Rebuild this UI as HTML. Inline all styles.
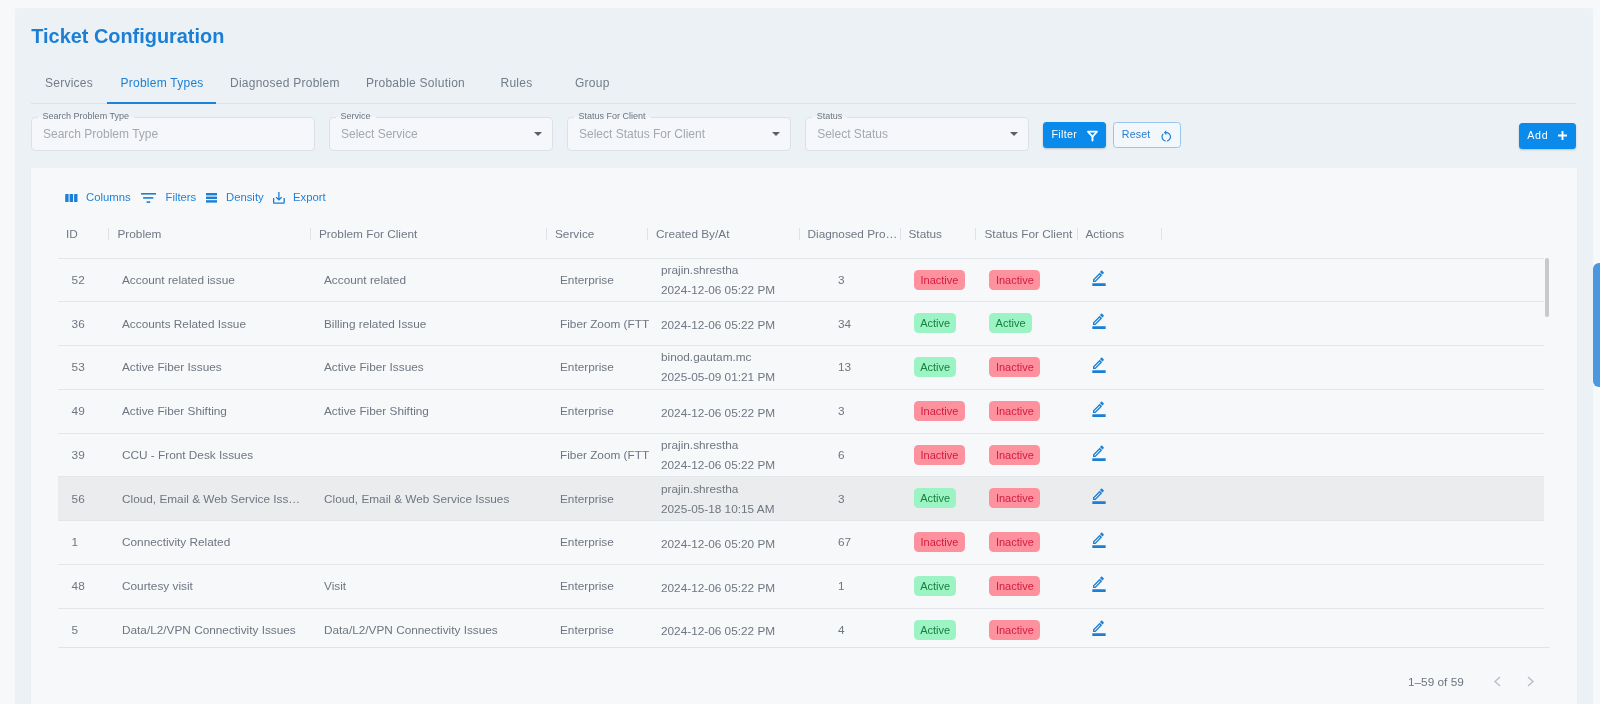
<!DOCTYPE html>
<html><head><meta charset="utf-8">
<style>
*{box-sizing:border-box;margin:0;padding:0}
html,body{width:1600px;height:704px;overflow:hidden;background:#f6f8f9;font-family:"Liberation Sans",sans-serif}
.abs{position:absolute;white-space:nowrap}
#panel{position:absolute;left:15px;top:8.5px;width:1577.6px;height:720px;background:#ebf1f5;border-radius:3px;box-shadow:0 -0.5px 1.5px rgba(0,0,0,0.04)}
#title{left:31.3px;top:24.3px;font-size:19.9px;font-weight:700;color:#1a7fd5;line-height:24px}
.tab{top:76px;font-size:12px;line-height:14px;color:#737d89;letter-spacing:0.25px}
.tab.on{color:#1a7fd5}
#tabline{left:31px;top:103px;width:1545px;height:1px;background:#dde2e8}
#ind{left:107px;top:102px;width:109px;height:2px;background:#1e82dc}
.fld{position:absolute;top:117px;height:34px;border:1px solid #dce1e6;border-radius:4px;background:#f5f7fa}
.lbl{position:absolute;top:-8.5px;left:5.6px;padding:0 5px;font-size:9px;line-height:12px;color:#6b7480;background:linear-gradient(#ebf1f5 0,#ebf1f5 7px,#f5f7fa 7px)}
.ph{position:absolute;left:11px;top:9.4px;font-size:12px;line-height:14px;color:#a3a9b0;white-space:nowrap}
.arr{position:absolute;top:13.9px;width:0;height:0;border-left:4px solid transparent;border-right:4px solid transparent;border-top:4.5px solid #5a5f66}
.btn{position:absolute;border-radius:3.5px;font-size:10.7px;line-height:14px}
.bt{letter-spacing:0.35px}
#card{position:absolute;left:31.3px;top:167.6px;width:1545.7px;height:560px;background:#f6f8fa;box-shadow:0 -0.5px 1.5px rgba(0,0,0,0.04)}
.tb{top:190.3px;font-size:11.3px;line-height:14px;color:#1e82dc}
.hd{top:227px;font-size:11.8px;line-height:14px;color:#707884}
.sep{position:absolute;top:228px;width:1px;height:12px;background:#dfe3e8}
.row{position:absolute;left:58px;width:1486px;height:43.75px;border-bottom:1px solid #e3e6ea}
.c{position:absolute;font-size:11.8px;line-height:14px;color:#6e7682;white-space:nowrap}
.chip{position:absolute;height:20px;border-radius:4.5px;font-size:11px;line-height:20px;text-align:center}
.in{background:#fd919e;color:#d31c3d}
.ac{background:#9cf4c4;color:#18803f}
</style></head>
<body>
<div id="root" style="position:absolute;left:0;top:0;width:1600px;height:704px;will-change:transform">
<div id="panel"></div>
<div id="title" class="abs">Ticket Configuration</div>
<div class="abs tab" style="left:45px">Services</div>
<div class="abs tab on" style="left:120.5px">Problem Types</div>
<div class="abs tab" style="left:230px">Diagnosed Problem</div>
<div class="abs tab" style="left:366px">Probable Solution</div>
<div class="abs tab" style="left:500.5px">Rules</div>
<div class="abs tab" style="left:575px">Group</div>
<div id="tabline" class="abs"></div>
<div id="ind" class="abs"></div>

<div class="fld" style="left:31px;width:283.5px"><span class="lbl">Search Problem Type</span><span class="ph">Search Problem Type</span></div>
<div class="fld" style="left:329px;width:223.8px"><span class="lbl">Service</span><span class="ph">Select Service</span><span class="arr" style="left:203.5px"></span></div>
<div class="fld" style="left:567px;width:224px"><span class="lbl">Status For Client</span><span class="ph">Select Status For Client</span><span class="arr" style="left:203.5px"></span></div>
<div class="fld" style="left:805.2px;width:224.3px"><span class="lbl">Status</span><span class="ph">Select Status</span><span class="arr" style="left:203.5px"></span></div>

<div class="btn" style="left:1043.4px;top:122px;width:62.6px;height:26px;background:#0a8beb;color:#fff;box-shadow:0 1px 2px rgba(0,0,0,.2)"><span class="abs bt" style="left:8px;top:4.8px">Filter</span>
<svg class="abs" style="left:42.6px;top:7.9px" width="12" height="12" viewBox="0 0 12 12"><path d="M1.9 1.6H11.1L6.5 6.6Z" fill="none" stroke="#fff" stroke-width="1.6" stroke-linejoin="round"/><path d="M6.5 6.3V10.6" stroke="#fff" stroke-width="1.9" stroke-linecap="round"/></svg></div>
<div class="btn" style="left:1113.2px;top:122px;width:67.5px;height:25.8px;border:1px solid #9ac5ea;background:#f2f7fc;color:#2283d6"><span class="abs bt" style="left:7.6px;top:3.6px;letter-spacing:0.15px;color:#2a7ccc">Reset</span>
<svg class="abs" style="left:44.5px;top:5.7px" width="14.5" height="14.5" viewBox="0 0 24 24"><path fill="#2283d6" d="M12 5V2L8 6l4 4V7c3.31 0 6 2.69 6 6 0 2.97-2.17 5.43-5 5.91v2.02c3.950-.49 7-3.85 7-7.93 0-4.42-3.58-8-8-8zm-6 8c0-1.65.67-3.15 1.76-4.24L6.34 7.34C4.9 8.79 4 10.79 4 13c0 4.08 3.05 7.44 7 7.93v-2.02c-2.83-.48-5-2.94-5-5.91z"/></svg></div>
<div class="btn" style="left:1519.3px;top:123.2px;width:56.6px;height:25.9px;background:#0a8beb;color:#fff;box-shadow:0 1px 2px rgba(0,0,0,.2)"><span class="abs bt" style="left:8px;top:5px;letter-spacing:0.65px">Add</span>
<svg class="abs" style="left:38.4px;top:7.9px" width="9" height="9" viewBox="0 0 9 9"><path d="M4.5 0V9M0 4.5H9" stroke="#fff" stroke-width="1.9"/></svg></div>

<div id="card"></div>
<svg class="abs" style="left:65px;top:193.8px" width="13" height="8.2" viewBox="0 0 13 8.2"><rect x="0.2" y="0" width="3.4" height="8.1" rx="0.5" fill="#1a7fd5"/><rect x="4.6" y="0" width="3.5" height="8.1" rx="0.5" fill="#1a7fd5"/><rect x="9.1" y="0" width="3.4" height="8.1" rx="0.5" fill="#1a7fd5"/></svg>
<svg class="abs" style="left:140.8px;top:193px" width="15" height="10" viewBox="0 0 15 10"><rect x="0" y="0" width="15" height="1.6" fill="#1a7fd5"/><rect x="2.1" y="4.1" width="10.2" height="1.6" fill="#1a7fd5"/><rect x="5.6" y="8.3" width="3.6" height="1.6" fill="#1a7fd5"/></svg>
<svg class="abs" style="left:205.6px;top:193.2px" width="11.3" height="9.6" viewBox="0 0 11.3 9.6"><rect x="0" y="0" width="11.3" height="2.4" fill="#1a7fd5"/><rect x="0" y="3.6" width="11.3" height="2.4" fill="#1a7fd5"/><rect x="0" y="7.2" width="11.3" height="2.4" fill="#1a7fd5"/></svg>
<svg class="abs" style="left:271.1px;top:190px" width="15.8" height="15.8" viewBox="0 0 24 24"><path fill="#1a7fd5" d="M19 12v7H5v-7H3v7c0 1.1.9 2 2 2h14c1.1 0 2-.9 2-2v-7h-2zm-6 .67l2.59-2.58L17 11.5l-5 5-5-5 1.41-1.41L11 12.67V3h2z"/></svg>
<div class="abs tb" style="left:86px">Columns</div>
<div class="abs tb" style="left:165.5px">Filters</div>
<div class="abs tb" style="left:226px">Density</div>
<div class="abs tb" style="left:293px">Export</div>

<div class="abs hd" style="left:66px">ID</div>
<div class="abs hd" style="left:117.5px">Problem</div>
<div class="abs hd" style="left:319px">Problem For Client</div>
<div class="abs hd" style="left:555px">Service</div>
<div class="abs hd" style="left:656px">Created By/At</div>
<div class="abs hd" style="left:807.5px">Diagnosed Pro…</div>
<div class="abs hd" style="left:908.5px">Status</div>
<div class="abs hd" style="left:984.5px">Status For Client</div>
<div class="abs hd" style="left:1085.5px">Actions</div>
<div class="sep" style="left:108px"></div>
<div class="sep" style="left:310px"></div>
<div class="sep" style="left:546px"></div>
<div class="sep" style="left:647px"></div>
<div class="sep" style="left:799px"></div>
<div class="sep" style="left:900px"></div>
<div class="sep" style="left:975px"></div>
<div class="sep" style="left:1076.5px"></div>
<div class="sep" style="left:1161px"></div>
<div class="abs" style="left:58px;top:258px;width:1486px;height:1px;background:#e3e6ea"></div>

<div style="position:absolute;left:0;top:0;width:1600px;height:647px;overflow:hidden"><div class="abs" style="left:58px;top:301px;width:1486px;height:1px;background:#e3e6ea"></div>
<div class="c" style="left:71.6px;top:272.98px">52</div>
<div class="c" style="left:122px;top:272.98px">Account related issue</div>
<div class="c" style="left:324px;top:272.98px">Account related</div>
<div class="c" style="left:560px;top:272.98px">Enterprise</div>
<div class="c" style="left:661px;top:262.98px">prajin.shrestha</div>
<div class="c" style="left:661px;top:282.98px">2024-12-06 05:22 PM</div>
<div class="c" style="left:838px;top:272.98px">3</div>
<div class="chip in" style="left:913.9px;top:269.57px;width:51.2px">Inactive</div>
<div class="chip in" style="left:989.3px;top:269.57px;width:51.2px">Inactive</div>
<svg class="abs" style="left:1091px;top:269.68px" width="16" height="16" viewBox="0 0 24 24"><path fill="#1a7fd5" d="M22 24H2v-4h20v4zM13.06 7.03l.91.91L5.91 16H5v-.91l8.06-8.06m3.6-5.94c-.19-.19-.45-.29-.71-.29s-.51.1-.7.29l-1.83 1.83 3.75 3.75 1.83-1.83c.39-.39.39-1.02 0-1.41l-2.34-2.34zm-3.6 3.19L3 14.25V18h3.75l10.06-10.06-3.75-3.75z"/></svg>
<div class="abs" style="left:58px;top:345px;width:1486px;height:1px;background:#e3e6ea"></div>
<div class="c" style="left:71.6px;top:316.73px">36</div>
<div class="c" style="left:122px;top:316.73px">Accounts Related Issue</div>
<div class="c" style="left:324px;top:316.73px">Billing related Issue</div>
<div class="c" style="left:560px;top:316.73px">Fiber Zoom (FTT</div>
<div class="c" style="left:661px;top:318.23px">2024-12-06 05:22 PM</div>
<div class="c" style="left:838px;top:316.73px">34</div>
<div class="chip ac" style="left:913.9px;top:313.32px;width:42.5px">Active</div>
<div class="chip ac" style="left:989.3px;top:313.32px;width:42.5px">Active</div>
<svg class="abs" style="left:1091px;top:313.43px" width="16" height="16" viewBox="0 0 24 24"><path fill="#1a7fd5" d="M22 24H2v-4h20v4zM13.06 7.03l.91.91L5.91 16H5v-.91l8.06-8.06m3.6-5.94c-.19-.19-.45-.29-.71-.29s-.51.1-.7.29l-1.83 1.83 3.75 3.75 1.83-1.83c.39-.39.39-1.02 0-1.41l-2.34-2.34zm-3.6 3.19L3 14.25V18h3.75l10.06-10.06-3.75-3.75z"/></svg>
<div class="abs" style="left:58px;top:389px;width:1486px;height:1px;background:#e3e6ea"></div>
<div class="c" style="left:71.6px;top:360.48px">53</div>
<div class="c" style="left:122px;top:360.48px">Active Fiber Issues</div>
<div class="c" style="left:324px;top:360.48px">Active Fiber Issues</div>
<div class="c" style="left:560px;top:360.48px">Enterprise</div>
<div class="c" style="left:661px;top:350.48px">binod.gautam.mc</div>
<div class="c" style="left:661px;top:370.48px">2025-05-09 01:21 PM</div>
<div class="c" style="left:838px;top:360.48px">13</div>
<div class="chip ac" style="left:913.9px;top:357.07px;width:42.5px">Active</div>
<div class="chip in" style="left:989.3px;top:357.07px;width:51.2px">Inactive</div>
<svg class="abs" style="left:1091px;top:357.18px" width="16" height="16" viewBox="0 0 24 24"><path fill="#1a7fd5" d="M22 24H2v-4h20v4zM13.06 7.03l.91.91L5.91 16H5v-.91l8.06-8.06m3.6-5.94c-.19-.19-.45-.29-.71-.29s-.51.1-.7.29l-1.83 1.83 3.75 3.75 1.83-1.83c.39-.39.39-1.02 0-1.41l-2.34-2.34zm-3.6 3.19L3 14.25V18h3.75l10.06-10.06-3.75-3.75z"/></svg>
<div class="abs" style="left:58px;top:433px;width:1486px;height:1px;background:#e3e6ea"></div>
<div class="c" style="left:71.6px;top:404.23px">49</div>
<div class="c" style="left:122px;top:404.23px">Active Fiber Shifting</div>
<div class="c" style="left:324px;top:404.23px">Active Fiber Shifting</div>
<div class="c" style="left:560px;top:404.23px">Enterprise</div>
<div class="c" style="left:661px;top:405.73px">2024-12-06 05:22 PM</div>
<div class="c" style="left:838px;top:404.23px">3</div>
<div class="chip in" style="left:913.9px;top:400.82px;width:51.2px">Inactive</div>
<div class="chip in" style="left:989.3px;top:400.82px;width:51.2px">Inactive</div>
<svg class="abs" style="left:1091px;top:400.93px" width="16" height="16" viewBox="0 0 24 24"><path fill="#1a7fd5" d="M22 24H2v-4h20v4zM13.06 7.03l.91.91L5.91 16H5v-.91l8.06-8.06m3.6-5.94c-.19-.19-.45-.29-.71-.29s-.51.1-.7.29l-1.83 1.83 3.75 3.75 1.83-1.83c.39-.39.39-1.02 0-1.41l-2.34-2.34zm-3.6 3.19L3 14.25V18h3.75l10.06-10.06-3.75-3.75z"/></svg>
<div class="abs" style="left:58px;top:476px;width:1486px;height:1px;background:#e3e6ea"></div>
<div class="c" style="left:71.6px;top:447.98px">39</div>
<div class="c" style="left:122px;top:447.98px">CCU - Front Desk Issues</div>
<div class="c" style="left:560px;top:447.98px">Fiber Zoom (FTT</div>
<div class="c" style="left:661px;top:437.98px">prajin.shrestha</div>
<div class="c" style="left:661px;top:457.98px">2024-12-06 05:22 PM</div>
<div class="c" style="left:838px;top:447.98px">6</div>
<div class="chip in" style="left:913.9px;top:444.57px;width:51.2px">Inactive</div>
<div class="chip in" style="left:989.3px;top:444.57px;width:51.2px">Inactive</div>
<svg class="abs" style="left:1091px;top:444.68px" width="16" height="16" viewBox="0 0 24 24"><path fill="#1a7fd5" d="M22 24H2v-4h20v4zM13.06 7.03l.91.91L5.91 16H5v-.91l8.06-8.06m3.6-5.94c-.19-.19-.45-.29-.71-.29s-.51.1-.7.29l-1.83 1.83 3.75 3.75 1.83-1.83c.39-.39.39-1.02 0-1.41l-2.34-2.34zm-3.6 3.19L3 14.25V18h3.75l10.06-10.06-3.75-3.75z"/></svg>
<div class="abs" style="left:58px;top:476.6px;width:1486px;height:44px;background:#ebecee"></div>
<div class="abs" style="left:58px;top:520px;width:1486px;height:1px;background:#e3e6ea"></div>
<div class="c" style="left:71.6px;top:491.73px">56</div>
<div class="c" style="left:122px;top:491.73px">Cloud, Email &amp; Web Service Iss…</div>
<div class="c" style="left:324px;top:491.73px">Cloud, Email &amp; Web Service Issues</div>
<div class="c" style="left:560px;top:491.73px">Enterprise</div>
<div class="c" style="left:661px;top:481.73px">prajin.shrestha</div>
<div class="c" style="left:661px;top:501.73px">2025-05-18 10:15 AM</div>
<div class="c" style="left:838px;top:491.73px">3</div>
<div class="chip ac" style="left:913.9px;top:488.32px;width:42.5px">Active</div>
<div class="chip in" style="left:989.3px;top:488.32px;width:51.2px">Inactive</div>
<svg class="abs" style="left:1091px;top:488.43px" width="16" height="16" viewBox="0 0 24 24"><path fill="#1a7fd5" d="M22 24H2v-4h20v4zM13.06 7.03l.91.91L5.91 16H5v-.91l8.06-8.06m3.6-5.94c-.19-.19-.45-.29-.71-.29s-.51.1-.7.29l-1.83 1.83 3.75 3.75 1.83-1.83c.39-.39.39-1.02 0-1.41l-2.34-2.34zm-3.6 3.19L3 14.25V18h3.75l10.06-10.06-3.75-3.75z"/></svg>
<div class="abs" style="left:58px;top:564px;width:1486px;height:1px;background:#e3e6ea"></div>
<div class="c" style="left:71.6px;top:535.48px">1</div>
<div class="c" style="left:122px;top:535.48px">Connectivity Related</div>
<div class="c" style="left:560px;top:535.48px">Enterprise</div>
<div class="c" style="left:661px;top:536.98px">2024-12-06 05:20 PM</div>
<div class="c" style="left:838px;top:535.48px">67</div>
<div class="chip in" style="left:913.9px;top:532.08px;width:51.2px">Inactive</div>
<div class="chip in" style="left:989.3px;top:532.08px;width:51.2px">Inactive</div>
<svg class="abs" style="left:1091px;top:532.17px" width="16" height="16" viewBox="0 0 24 24"><path fill="#1a7fd5" d="M22 24H2v-4h20v4zM13.06 7.03l.91.91L5.91 16H5v-.91l8.06-8.06m3.6-5.94c-.19-.19-.45-.29-.71-.29s-.51.1-.7.29l-1.83 1.83 3.75 3.75 1.83-1.83c.39-.39.39-1.02 0-1.41l-2.34-2.34zm-3.6 3.19L3 14.25V18h3.75l10.06-10.06-3.75-3.75z"/></svg>
<div class="abs" style="left:58px;top:608px;width:1486px;height:1px;background:#e3e6ea"></div>
<div class="c" style="left:71.6px;top:579.23px">48</div>
<div class="c" style="left:122px;top:579.23px">Courtesy visit</div>
<div class="c" style="left:324px;top:579.23px">Visit</div>
<div class="c" style="left:560px;top:579.23px">Enterprise</div>
<div class="c" style="left:661px;top:580.73px">2024-12-06 05:22 PM</div>
<div class="c" style="left:838px;top:579.23px">1</div>
<div class="chip ac" style="left:913.9px;top:575.83px;width:42.5px">Active</div>
<div class="chip in" style="left:989.3px;top:575.83px;width:51.2px">Inactive</div>
<svg class="abs" style="left:1091px;top:575.92px" width="16" height="16" viewBox="0 0 24 24"><path fill="#1a7fd5" d="M22 24H2v-4h20v4zM13.06 7.03l.91.91L5.91 16H5v-.91l8.06-8.06m3.6-5.94c-.19-.19-.45-.29-.71-.29s-.51.1-.7.29l-1.83 1.83 3.75 3.75 1.83-1.83c.39-.39.39-1.02 0-1.41l-2.34-2.34zm-3.6 3.19L3 14.25V18h3.75l10.06-10.06-3.75-3.75z"/></svg>
<div class="abs" style="left:58px;top:651px;width:1486px;height:1px;background:#e3e6ea"></div>
<div class="c" style="left:71.6px;top:622.98px">5</div>
<div class="c" style="left:122px;top:622.98px">Data/L2/VPN Connectivity Issues</div>
<div class="c" style="left:324px;top:622.98px">Data/L2/VPN Connectivity Issues</div>
<div class="c" style="left:560px;top:622.98px">Enterprise</div>
<div class="c" style="left:661px;top:624.48px">2024-12-06 05:22 PM</div>
<div class="c" style="left:838px;top:622.98px">4</div>
<div class="chip ac" style="left:913.9px;top:619.58px;width:42.5px">Active</div>
<div class="chip in" style="left:989.3px;top:619.58px;width:51.2px">Inactive</div>
<svg class="abs" style="left:1091px;top:619.67px" width="16" height="16" viewBox="0 0 24 24"><path fill="#1a7fd5" d="M22 24H2v-4h20v4zM13.06 7.03l.91.91L5.91 16H5v-.91l8.06-8.06m3.6-5.94c-.19-.19-.45-.29-.71-.29s-.51.1-.7.29l-1.83 1.83 3.75 3.75 1.83-1.83c.39-.39.39-1.02 0-1.41l-2.34-2.34zm-3.6 3.19L3 14.25V18h3.75l10.06-10.06-3.75-3.75z"/></svg></div>

<div class="abs" style="left:1545px;top:258px;width:4.3px;height:58.6px;border-radius:2px;background:#c8c9cb"></div>
<div class="abs" style="left:58px;top:647px;width:1491.5px;height:1px;background:#e0e3e7"></div>
<div class="abs" style="left:1408px;top:674.5px;font-size:11.8px;line-height:14px;color:#6b7480">1–59 of 59</div>
<svg class="abs" style="left:1492px;top:676px" width="10" height="11" viewBox="0 0 10 11"><path d="M8 1L3 5.5L8 10" fill="none" stroke="#b9bfc6" stroke-width="1.4"/></svg>
<svg class="abs" style="left:1526px;top:676px" width="10" height="11" viewBox="0 0 10 11"><path d="M2 1L7 5.5L2 10" fill="none" stroke="#b9bfc6" stroke-width="1.4"/></svg>
<div class="abs" style="left:1592.8px;top:262.6px;width:20px;height:124.2px;border-radius:6px;background:#4a99e0"></div>
</div>
</body></html>
